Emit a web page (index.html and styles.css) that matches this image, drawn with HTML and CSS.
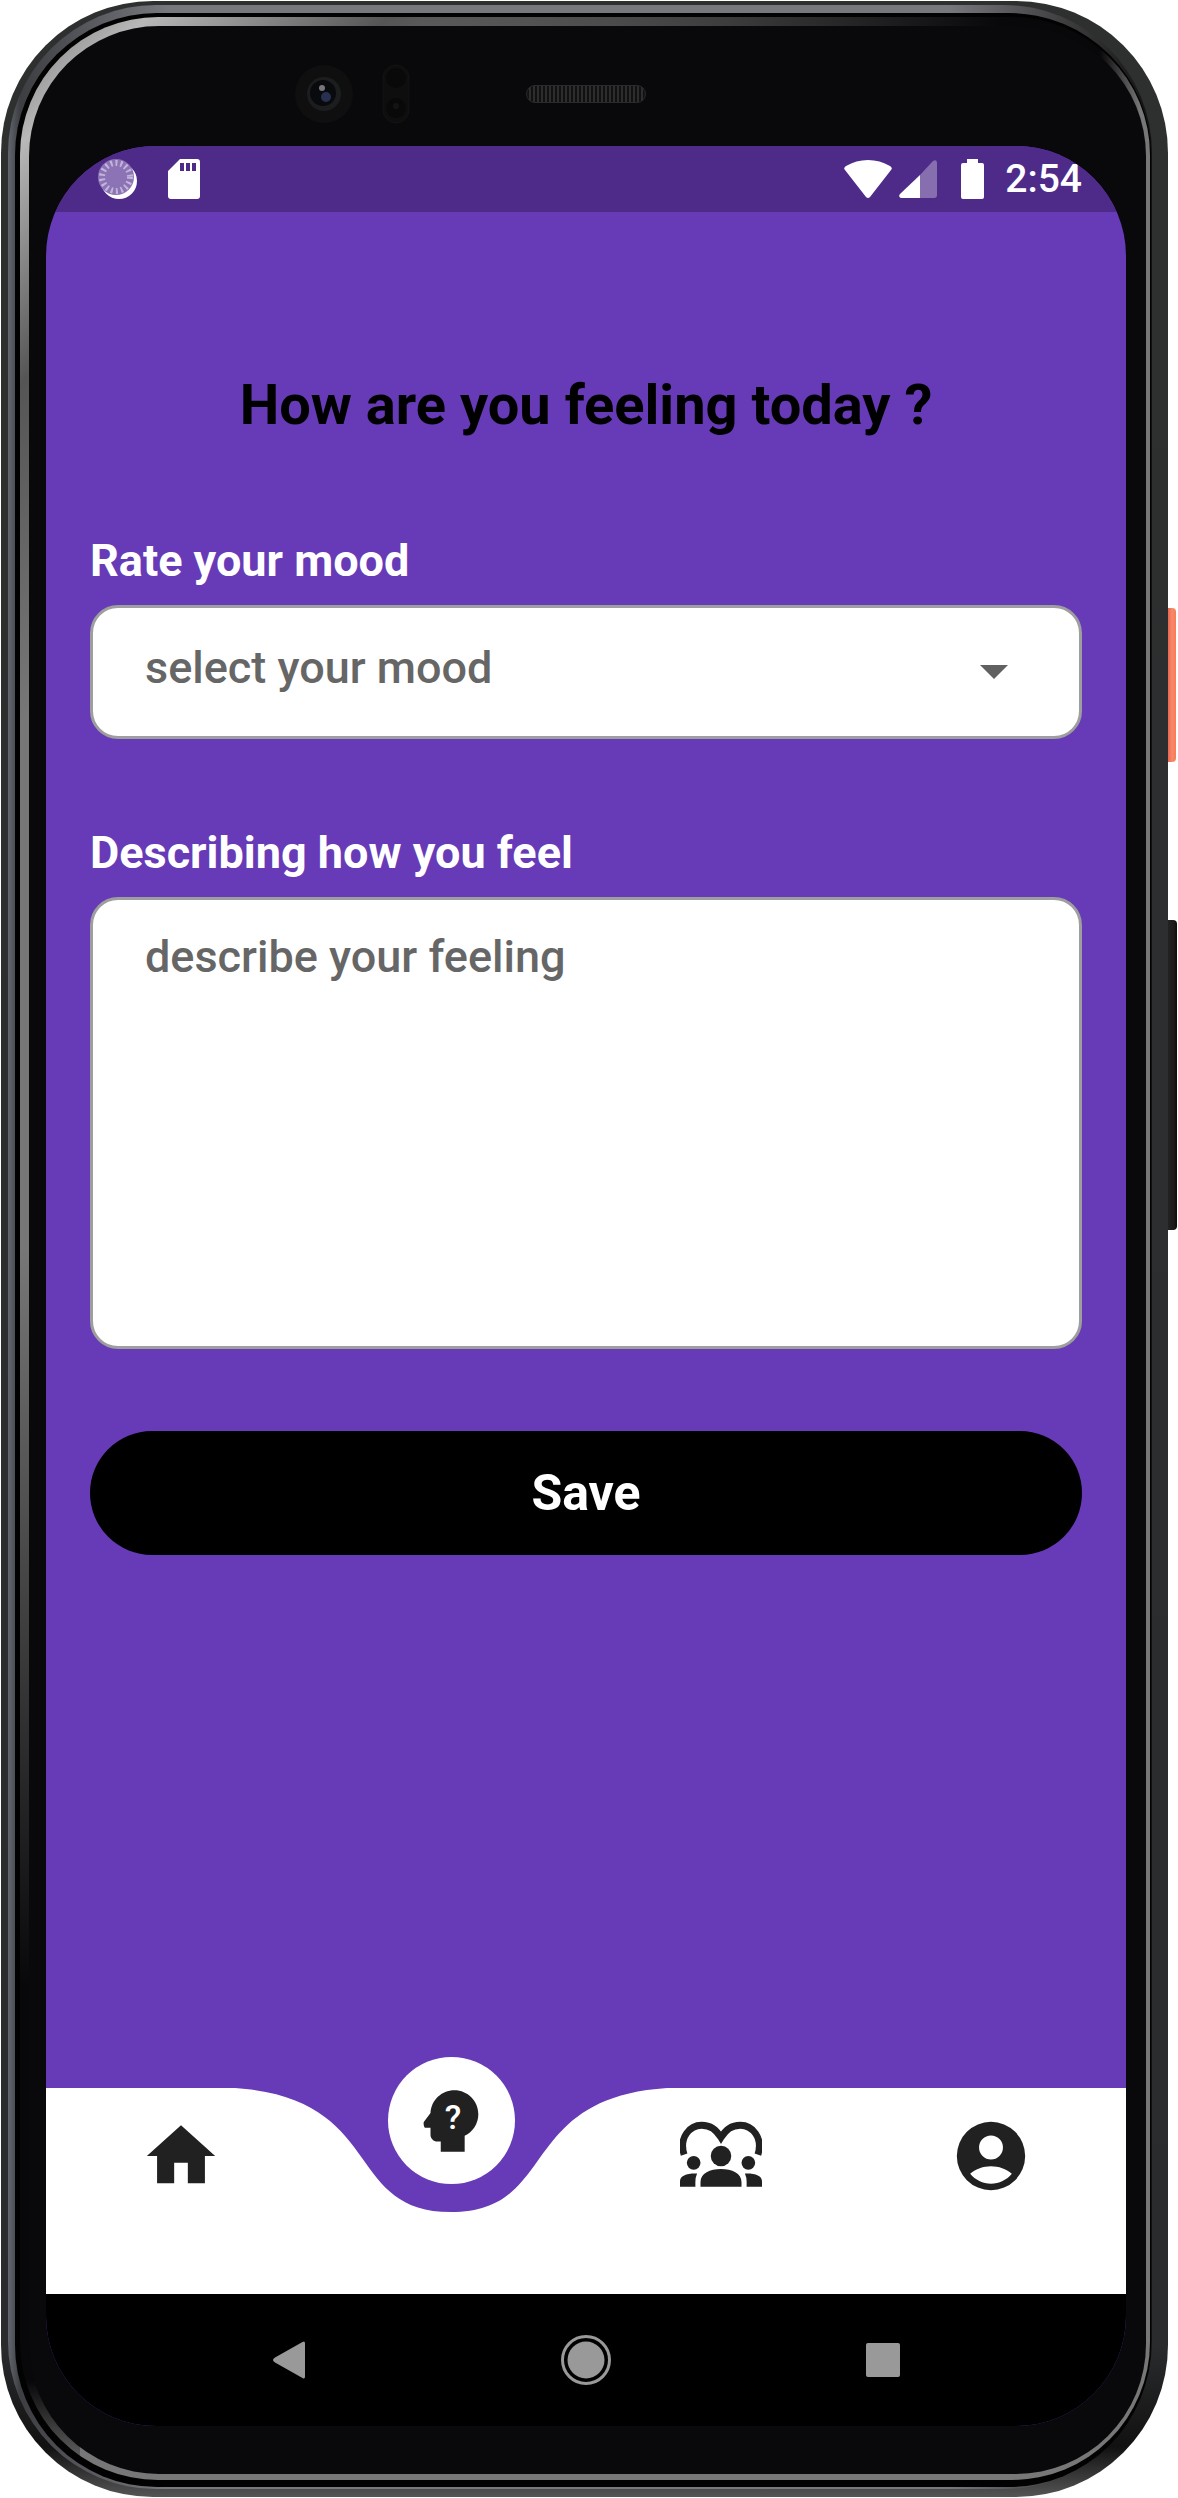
FILE: index.html
```html
<!DOCTYPE html>
<html lang="en">
<head>
<meta charset="utf-8">
<meta name="viewport" content="width=device-width, initial-scale=1">
<title>Mood journal</title>
<link rel="stylesheet" href="styles.css">
</head>
<body>
<div class="phone">
  <div class="shell"><div class="rim"><div class="groove"><div class="bevel"><div class="bezel">
    <div class="sensors">
      <svg class="camera" viewBox="0 0 60 60" aria-hidden="true">
        <circle cx="30" cy="30" r="29" fill="#0f0f10"/>
        <circle cx="30" cy="30" r="17" fill="#1c1d1e"/>
        <circle cx="29" cy="29" r="13" fill="#090a0e"/>
        <circle cx="32" cy="33" r="5" fill="#27304f"/>
        <circle cx="28" cy="24" r="3" fill="#77777b"/>
      </svg>
      <svg class="proximity" viewBox="0 0 28 60" aria-hidden="true">
        <rect x="1" y="1" width="26" height="58" rx="13" fill="#0e0e0f" stroke="#131314"/>
        <circle cx="14" cy="14" r="10" fill="#09090a"/>
        <circle cx="14" cy="44" r="10" fill="#09090a"/>
        <circle cx="14" cy="42" r="3" fill="#141415"/>
      </svg>
      <div class="speaker"></div>
    </div>
    <main class="screen">
      <header class="status">
        <svg class="sync" viewBox="0 0 40 46" aria-hidden="true">
          <circle cx="21" cy="25" r="18" fill="#fff"/>
          <circle cx="18" cy="21" r="18" fill="#8c73b5"/>
          <circle cx="18" cy="21" r="14" fill="none" stroke="#c3b5da" stroke-width="6" stroke-dasharray="2 3"/>
        </svg>
        <svg class="card" viewBox="0 0 32 40" aria-hidden="true">
          <path fill="#fff" fill-rule="evenodd" d="M12 0h17a3 3 0 0 1 3 3v34a3 3 0 0 1-3 3H3a3 3 0 0 1-3-3V12zM12 4v8h4V4zm6 0v8h4V4zm6 0v8h4V4z"/>
        </svg>
        <svg class="wifi" viewBox="0 0 48 38" aria-hidden="true"><path fill="#fff" d="M1 10Q-1 8 2 6Q12 0 24 0T46 6Q49 8 47 10L26 37Q24 39 22 37z"/></svg>
        <svg class="signal" viewBox="0 0 38 38" aria-hidden="true">
          <path fill="#fff" fill-opacity=".32" d="M21 15L34 1Q38-1 38 3V35Q38 38 35 38H21z"/>
          <path fill="#fff" d="M21 15V38H2Q-1 37 1 34z"/>
        </svg>
        <svg class="battery" viewBox="0 0 24 40" aria-hidden="true"><path fill="#fff" d="M6 0h11v4h4a2 2 0 0 1 2 2v32a2 2 0 0 1-2 2H2a2 2 0 0 1-2-2V6a2 2 0 0 1 2-2h4z"/></svg>
        <time class="clock">2:54</time>
      </header>

      <form class="journal">
        <h1 class="title">How are you feeling today ?</h1>
        <label class="label" for="mood">Rate your mood</label>
        <div class="picker">
          <select class="field select" id="mood">
            <option>select your mood</option>
          </select>
          <svg class="caret" viewBox="0 0 28 14" aria-hidden="true"><path fill="#616161" d="M0 0h28L14 14z"/></svg>
        </div>
        <label class="label" for="feeling">Describing how you feel</label>
        <textarea class="field notes" id="feeling" placeholder="describe your feeling"></textarea>
        <button class="save" type="button">Save</button>
      </form>

      <nav class="tabs">
        <svg class="wave" viewBox="0 0 1080 206" preserveAspectRatio="none" aria-hidden="true">
          <path fill="#fff" d="M0 0H189C340 10 297 124 405 124C513 124 470 10 621 0H1080V206H0z"/>
        </svg>
        <a class="tab" href="#home" aria-label="Home">
          <svg class="icon" viewBox="0 0 24 24"><path d="M10 20v-6h4v6h5v-8h3L12 3 2 12h3v8z"/></svg>
        </a>
        <a class="tab current" href="#mood" aria-label="Mood">
          <span class="disc">
            <svg class="icon" viewBox="0 0 24 24"><path fill-rule="evenodd" d="M13 3C9.230 3 6.190 5.950 6 9.660l-1.920 2.530C3.840 12.510 4.080 14 4.500 14H6v2c0 1.110.89 2 2 2h1v3h7v-4.690c2.370-1.120 4-3.510 4-6.310 0-3.860-3.120-7-7-7z"/></svg>
            <span class="mark">?</span>
          </span>
        </a>
        <a class="tab" href="#community" aria-label="Community">
          <svg class="icon" viewBox="0 0 24 24">
            <path fill="none" stroke="#212121" stroke-width="2" d="M1.200 11.600C-.4 6.500 3 3 6.300 3C9 3 10.500 4.200 12 6.600C13.500 4.200 15 3 17.700 3C21 3 24.400 6.500 22.800 11.600"/>
            <circle cx="12" cy="12" r="3"/><circle cx="4" cy="14" r="2"/><circle cx="20" cy="14" r="2"/>
            <path d="M6 21v-1.400C6 17 8.800 15.800 12 15.800S18 17 18 19.600V21zM0 21v-1.600C0 17.700 2 17 5 17.100Q4.500 18.200 4.500 19.600V21zM24 21v-1.600C24 17.700 22 17 19 17.100Q19.500 18.200 19.500 19.600V21z"/>
          </svg>
        </a>
        <a class="tab" href="#profile" aria-label="Profile">
          <svg class="icon" viewBox="0 0 24 24"><path fill-rule="evenodd" d="M12 2a10 10 0 1 0 0 20 10 10 0 0 0 0-20zm0 4a3.500 3.500 0 1 1 0 7 3.500 3.500 0 0 1 0-7zm0 14.100c-2.400 0-4.600-1.100-6.100-2.900 1.700-1.400 3.800-2.200 6.100-2.200s4.400.8 6.100 2.200c-1.500 1.800-3.700 2.900-6.100 2.900z"/></svg>
        </a>
      </nav>

      <footer class="system">
        <button class="key" type="button" aria-label="Back"><svg viewBox="0 0 50 50"><path fill="#999" d="M41 8.500V41.500Q41 44.500 38.500 43L11 27.500Q7 25 11 22.500L38.500 7Q41 5.500 41 8.500z"/></svg></button>
        <button class="key" type="button" aria-label="Home"><svg viewBox="0 0 50 50"><circle cx="25" cy="25" r="18.500" fill="#999"/><circle cx="25" cy="25" r="23.500" fill="none" stroke="#999" stroke-width="3"/></svg></button>
        <button class="key" type="button" aria-label="Recent apps"><svg viewBox="0 0 50 50"><rect x="8" y="8" width="34" height="34" rx="2" fill="#999"/></svg></button>
      </footer>
    </main>
  </div></div></div></div></div>
  <div class="side"><div class="power"></div><div class="volume"></div></div>
</div>
</body>
</html>
```
FILE: styles.css
```css
* { box-sizing: border-box; }
body { margin: 0; background: #fff; font-family: Roboto, sans-serif; }
svg { display: block; }

/* Device body: each layer is one ring of the metal and glass edge */
.phone { display: flex; padding: 1px; }
.shell { flex: 1; min-width: 0; padding: 4px 16px 8px 7px; border-radius: 152px; background: linear-gradient(#2e3030, #2a2b2d 94%, #111 98%, #555 100%); }
.rim { padding: 8px 1px 2px 7px; border-radius: 148px; background: linear-gradient(90deg, #63676e, #3c3e42 12px, #77777e 160px, #77777e 940px, #333 1080px, #111); }
.groove { padding: 4px 1px 7px 5px; border-radius: 142px; background: #020202; }
.bevel {
  padding: 9px 4px 6px 9px;
  border-radius: 138px;
  background:
    linear-gradient(90deg, transparent 400px, #08080a 980px, #08080a 1080px, transparent 1120px) top / 100% 100px no-repeat,
    linear-gradient(transparent 50%, #08080a 80%, #08080a 96%, transparent) left / 60px 100% no-repeat,
    linear-gradient(135deg, #777, #b8b8b8 90px, #555 260px, #777 500px);
}
.bezel { padding: 0 20px 48px 17px; border-radius: 130px; background: #09090b; }

.sensors { display: flex; align-items: center; height: 120px; padding: 16px 0 0 248px; }
.camera { width: 60px; height: 60px; margin-right: 28px; }
.proximity { width: 28px; height: 60px; margin-right: 116px; }
.speaker { width: 120px; height: 18px; border: 1px solid #2a2a2a; border-radius: 9px; background: repeating-linear-gradient(90deg, #111 0 2px, #2d2d2d 2px 4px); }

.side { width: 9px; padding-top: 607px; }
.power { height: 154px; width: 8px; margin-bottom: 158px; border-radius: 0 4px 4px 0; background: linear-gradient(90deg, #f0654a, #f28a70 4px, #ff7a50); }
.volume { height: 310px; border-radius: 0 4px 4px 0; background: linear-gradient(90deg, #222, #1b1b1b 6px, #0c0c0c); }

.screen { display: flex; flex-direction: column; min-height: 2280px; overflow: hidden; border-radius: 110px; background: #673ab7; }

.status { display: flex; align-items: center; height: 66px; padding: 0 44px 0 52px; background: #4e2b89; }
.sync { width: 40px; height: 46px; margin-right: 30px; }
.card { width: 32px; height: 40px; margin-right: auto; }
.wifi { width: 48px; height: 38px; margin-right: 7px; }
.signal { width: 38px; height: 38px; margin-right: 24px; }
.battery { width: 24px; height: 40px; margin-right: 20px; }
.clock { color: #fff; font-size: 39px; font-weight: 500; line-height: 68px; }

.journal { display: flex; flex-direction: column; flex: 1; padding: 160px 44px 0; }
.title { margin: 0 0 97px; color: #000; font-size: 56px; font-weight: 700; line-height: 66px; text-align: center; }
.label { margin-bottom: 18px; color: #fff; font-size: 45px; font-weight: 700; line-height: 52px; }
.picker { display: grid; align-items: center; margin-bottom: 88px; }
.picker > * { grid-area: 1 / 1; }
.field { width: 100%; border: 3px solid #9e9e9e; border-radius: 28px; background: #fff; color: #666; font: 500 45px/52px Roboto, sans-serif; }
.select { height: 134px; padding: 0 52px 8px; appearance: none; }
.caret { width: 28px; height: 14px; justify-self: end; margin-right: 74px; pointer-events: none; }
.notes { display: block; height: 452px; margin-bottom: 82px; padding: 31px 52px; resize: none; }
.notes::placeholder { color: #666; opacity: 1; }
.save { height: 124px; border: 0; border-radius: 62px; background: #000; color: #fff; font: 700 50px/60px Roboto, sans-serif; }

/* Tab bar: the wave is the bar's backdrop, the tabs share its grid row */
.tabs { display: grid; grid-template-columns: repeat(4, 1fr); height: 206px; }
.wave { grid-area: 1 / 1 / 2 / 5; width: 100%; height: 206px; }
.tab { grid-row: 1; display: flex; justify-content: center; padding-top: 27px; text-decoration: none; }
.tab:nth-of-type(1) { grid-column: 1; }
.tab:nth-of-type(2) { grid-column: 2; }
.tab:nth-of-type(3) { grid-column: 3; }
.tab:nth-of-type(4) { grid-column: 4; }
.icon { width: 82px; height: 82px; fill: #212121; }
.current { padding: 0; }
.disc { display: grid; place-items: center; width: 127px; height: 127px; margin-top: -31px; border-radius: 50%; background: #fff; }
.disc > * { grid-area: 1 / 1; }
.mark { padding: 0 0 8px 4px; color: #fff; font-size: 34px; font-weight: 500; line-height: 34px; }

.system { display: flex; justify-content: space-around; align-items: center; height: 132px; padding: 0 94px; background: #000; }
.key { padding: 0; border: 0; background: none; }
.key svg { width: 50px; height: 50px; }
```
